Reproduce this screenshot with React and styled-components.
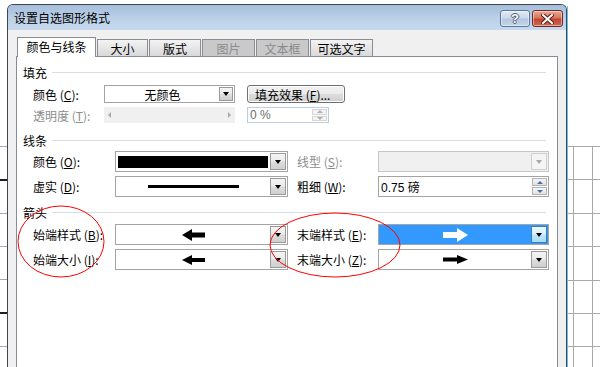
import styled, { createGlobalStyle } from "styled-components";

const GlobalStyle = createGlobalStyle`
  html, body {
    margin: 0;
    padding: 0;
    background: #fff;
    overflow: hidden;
  }
  body {
    font-family: "Noto Sans CJK SC", "Liberation Sans", sans-serif;
    font-size: 12px;
    color: #000;
  }
`;

const Page = styled.div`
  position: relative;
  width: 600px;
  height: 367px;
  overflow: hidden;
  display: flex;
  align-items: flex-start;
`;

const LeftStrip = styled.div`
  width: 7px;
  height: 367px;
  background: linear-gradient(
    to bottom,
    transparent 0 146px, #a9a9a9 146px 147px,
    transparent 147px 179px, #1e1e1e 179px 181px,
    transparent 181px 213px, #a9a9a9 213px 214px,
    transparent 214px 246px, #a9a9a9 246px 247px,
    transparent 247px 279px, #a9a9a9 279px 280px,
    transparent 280px 312px, #1e1e1e 312px 314px,
    transparent 314px 346px, #a9a9a9 346px 347px,
    transparent 347px
  );
`;

const RightStrip = styled.div`
  flex: 1;
  height: 367px;
  margin-top: 6px;
  border-left: 1px solid #5cc6ee;
  background:
    repeating-linear-gradient(to bottom, #a9a9a9 0 1px, transparent 1px 33.4px) 0 140px / 100% 240px no-repeat,
    linear-gradient(to right, transparent 5px, #a9a9a9 5px 6px, transparent 6px 24px, #a9a9a9 24px 25px, transparent 25px) 0 140px / 100% 240px no-repeat;
`;

const Dialog = styled.div`
  box-sizing: border-box;
  width: 560px;
  height: 380px;
  margin-top: 4px;
  border: 1px solid #3f4650;
  border-bottom: none;
  border-radius: 6px 6px 0 0;
  background: #f0f0f0;
  display: flex;
  flex-direction: column;
  overflow: hidden;
`;

const TitleBar = styled.div`
  height: 25px;
  display: flex;
  align-items: flex-start;
  padding: 0 3px 0 6px;
  background: linear-gradient(#a6bdda, #bcd1e9 55%, #c6d9ee);
`;

const Title = styled.div`
  flex: 1;
  line-height: 25px;
`;

const CaptionButton = styled.div`
  box-sizing: border-box;
  width: ${(p) => p.$w}px;
  height: 17px;
  margin-top: 5px;
  margin-left: ${(p) => p.$ml || 0}px;
  border: 1px solid ${(p) => (p.$close ? "#6e2a22" : "#5d7699")};
  border-radius: 3px;
  background: ${(p) =>
    p.$close
      ? "linear-gradient(#eaa796, #d8765f 45%, #c2452e 55%, #cf6a4f)"
      : "linear-gradient(#e3ebf5, #cbd9ea 45%, #b3c7e0 55%, #c4d6ea)"};
  box-shadow: inset 0 0 0 1px rgba(255, 255, 255, 0.45);
  display: flex;
  align-items: center;
  justify-content: center;
  font-family: "Liberation Sans", sans-serif;
  font-weight: bold;
  font-size: 13px;
  color: #fff;
  text-shadow: 1px 0 0 #4b5d77, -1px 0 0 #4b5d77, 0 1px 0 #4b5d77, 0 -1px 0 #4b5d77;
`;

const Body = styled.div`
  flex: 1;
  display: flex;
  flex-direction: column;
  padding: 7px 8px 0 8px;
`;

const TabRow = styled.div`
  display: flex;
  align-items: flex-end;
  gap: 1px;
  height: 20px;
  margin: 0 0 -1px 1px;
  position: relative;
  z-index: 1;
`;

const Tab = styled.div`
  box-sizing: border-box;
  width: ${(p) => p.$w}px;
  height: ${(p) => (p.$active ? 20 : 17)}px;
  margin-bottom: ${(p) => (p.$active ? 0 : 1)}px;
  border: 1px solid #898c95;
  border-bottom: none;
  display: flex;
  align-items: center;
  justify-content: center;
  color: ${(p) => (p.$disabled ? "#8b8b8b" : "#000")};
  background: ${(p) =>
    p.$active ? "#fff" : p.$disabled ? "#c9c9c9" : "linear-gradient(#f3f3f3, #e6e6e6 50%, #d9d9d9)"};
  padding-bottom: ${(p) => (p.$active ? 2 : 0)}px;
`;

const Panel = styled.div`
  flex: 1;
  background: #fff;
  border: 1px solid #898c95;
  padding: 5px 7px 0 6px;
`;

const SectionHead = styled.div`
  display: flex;
  align-items: center;
  gap: 5px;
  height: 20px;
  margin-top: ${(p) => p.$mt || 0}px;
  &::after {
    content: "";
    flex: 1;
    height: 1px;
    background: #d7dee4;
    margin-right: 4px;
  }
`;

const FormGrid = styled.div`
  display: grid;
  grid-template-columns: ${(p) => p.$cols};
  grid-template-rows: ${(p) => p.$rows};
  row-gap: 4px;
  margin-top: ${(p) => p.$mt || 0}px;
  padding-left: 10px;
`;

const Label = styled.div`
  display: flex;
  align-items: center;
  white-space: nowrap;
  padding-left: ${(p) => p.$pl || 0}px;
  color: ${(p) => (p.$disabled ? "#8d8d8d" : "#000")};
  u {
    text-decoration: underline;
  }
`;

const Select = styled.div`
  box-sizing: border-box;
  height: 100%;
  display: flex;
  padding: 1px;
  border: 1px solid ${(p) => (p.$disabled ? "#c6c6c6" : "#a4a4a4")};
  background: ${(p) => (p.$active ? "#3399ff" : p.$disabled ? "#f0f0f0" : "#fff")};
`;

const SelectValue = styled.div`
  flex: 1;
  display: flex;
  align-items: center;
  justify-content: center;
  padding: ${(p) => p.$pad || "0"};
`;

const Swatch = styled.div`
  flex: 1;
  align-self: stretch;
  background: #000;
`;

const DashLine = styled.div`
  width: 91px;
  height: 3px;
  background: #000;
`;

const DropButton = styled.div`
  box-sizing: border-box;
  width: ${(p) => p.$w || 16}px;
  border: 1px solid ${(p) => (p.$active ? "#3c7fb1" : p.$disabled ? "#cfcfcf" : "#9a9a9a")};
  background: ${(p) =>
    p.$active
      ? "linear-gradient(#eaf6fd, #d9f0fc 45%, #bee6fd 55%, #a7d9f5)"
      : p.$disabled
      ? "#f4f4f4"
      : "linear-gradient(#f4f4f4, #ebebeb 45%, #dcdcdc 55%, #cfcfcf)"};
  display: flex;
  align-items: center;
  justify-content: center;
  &::after {
    content: "";
    border-left: 3.5px solid transparent;
    border-right: 3.5px solid transparent;
    border-top: 4px solid ${(p) => (p.$disabled ? "#a8a8a8" : "#000")};
  }
`;

const PushButton = styled.div`
  box-sizing: border-box;
  width: 98px;
  height: 18px;
  border: 1px solid #707070;
  border-radius: 3px;
  background: linear-gradient(#f2f2f2, #ebebeb 50%, #dddddd 50%, #cfcfcf);
  box-shadow: inset 0 0 0 1px #fbfbfb;
  display: flex;
  align-items: center;
  padding-left: 7px;
  white-space: nowrap;
`;

const Slider = styled.div`
  display: flex;
  align-items: center;
  justify-content: space-between;
  padding: 0 4px;
  background: #f0f0f0;
  &::before,
  &::after {
    content: "";
    border-top: 3px solid transparent;
    border-bottom: 3px solid transparent;
  }
  &::before {
    border-right: 3px solid #a9a9a9;
  }
  &::after {
    border-left: 3px solid #a9a9a9;
  }
`;

const Spin = styled.div`
  box-sizing: border-box;
  width: ${(p) => p.$w}px;
  height: 100%;
  display: flex;
  border: 1px solid ${(p) => (p.$disabled ? "#bcd0e4" : "#a4a4a4")};
  background: #fff;
`;

const SpinText = styled.div`
  flex: 1;
  display: flex;
  align-items: center;
  padding-left: 2px;
  color: ${(p) => (p.$disabled ? "#6d6d6d" : "#000")};
  font-family: "Liberation Sans", "Noto Sans CJK SC", sans-serif;
`;

const SpinButtons = styled.div`
  width: 15px;
  display: flex;
  flex-direction: column;
  padding: 1px;
  gap: 1px;
`;

const SpinHalf = styled.div`
  flex: 1;
  border: 1px solid ${(p) => (p.$disabled ? "#d5d5d5" : "#b3b3b3")};
  background: ${(p) => (p.$disabled ? "#f4f4f4" : "linear-gradient(#f6f6f6, #e1e1e1)")};
  display: flex;
  align-items: center;
  justify-content: center;
  &::after {
    content: "";
    border-left: 3px solid transparent;
    border-right: 3px solid transparent;
    ${(p) => (p.$up ? "border-bottom" : "border-top")}: 3px solid ${(p) =>
      p.$disabled ? "#b0b0b0" : "#4b6fa7"};
  }
`;

const Marks = styled.svg`
  position: absolute;
  left: 0;
  top: 0;
  pointer-events: none;
`;

function Arrow({ dir, color, w, h, shaft }) {
  const head = Math.round(w * 0.45);
  const mid = h / 2;
  const s0 = mid - shaft / 2;
  if (dir === "left") {
    return (
      <svg width={w} height={h}>
        <polygon points={`0,${mid} ${head},0 ${head},${h}`} fill={color} />
        <rect x={head - 1} y={s0} width={w - head + 1} height={shaft} fill={color} />
      </svg>
    );
  }
  return (
    <svg width={w} height={h}>
      <rect x="0" y={s0} width={w - head + 1} height={shaft} fill={color} />
      <polygon points={`${w - head},0 ${w},${mid} ${w - head},${h}`} fill={color} />
    </svg>
  );
}

function Dropdown({ children, pad, active, disabled, btnW }) {
  return (
    <Select $active={active} $disabled={disabled}>
      <SelectValue $pad={pad}>{children}</SelectValue>
      <DropButton $active={active} $disabled={disabled} $w={btnW} />
    </Select>
  );
}

function SpinBox({ text, w, disabled }) {
  return (
    <Spin $w={w} $disabled={disabled}>
      <SpinText $disabled={disabled}>{text}</SpinText>
      <SpinButtons>
        <SpinHalf $up $disabled={disabled} />
        <SpinHalf $disabled={disabled} />
      </SpinButtons>
    </Spin>
  );
}

const tabs = [
  { name: "颜色与线条", w: 79, active: true },
  { name: "大小", w: 51 },
  { name: "版式", w: 52 },
  { name: "图片", w: 53, disabled: true },
  { name: "文本框", w: 53, disabled: true },
  { name: "可选文字", w: 63 },
];

const lineCols = "82px 173px 90px 171px";

export default function App() {
  return (
    <Page>
      <GlobalStyle />
      <LeftStrip />
      <Dialog>
        <TitleBar>
          <Title>设置自选图形格式</Title>
          <CaptionButton $w={30}>?</CaptionButton>
          <CaptionButton $w={31} $ml={2} $close>
            <svg width="13" height="10" viewBox="0 0 13 10">
              <path d="M2 1 L11 9 M11 1 L2 9" stroke="#5a2219" strokeWidth="4" strokeLinecap="square" />
              <path d="M2 1 L11 9 M11 1 L2 9" stroke="#fff" strokeWidth="2" strokeLinecap="square" />
            </svg>
          </CaptionButton>
        </TitleBar>
        <Body>
          <TabRow>
            {tabs.map((t) => (
              <Tab key={t.name} $w={t.w} $active={t.active} $disabled={t.disabled}>
                {t.name}
              </Tab>
            ))}
          </TabRow>
          <Panel>
            <SectionHead>填充</SectionHead>
            <FormGrid $cols="71px 131px 12px 98px" $rows="18px 16px" $mt={3}>
              <Label>
                颜色 (<u>C</u>):
              </Label>
              <Dropdown btnW={14}>无颜色</Dropdown>
              <div />
              <PushButton>
                填充效果 (<u>F</u>)...
              </PushButton>
              <Label $disabled>
                透明度 (<u>T</u>):
              </Label>
              <Slider />
              <div />
              <SpinBox text="0 %" w={82} disabled />
            </FormGrid>

            <SectionHead $mt={7}>线条</SectionHead>
            <FormGrid $cols={lineCols} $rows="21px 21px" $mt={1}>
              <Label>
                颜色 (<u>O</u>):
              </Label>
              <Dropdown pad="3px 2px 2px 1px">
                <Swatch />
              </Dropdown>
              <Label $pl={9} $disabled>
                线型 (<u>S</u>):
              </Label>
              <Dropdown disabled />
              <Label>
                虚实 (<u>D</u>):
              </Label>
              <Dropdown>
                <DashLine />
              </Dropdown>
              <Label $pl={9}>
                粗细 (<u>W</u>):
              </Label>
              <SpinBox text="0.75 磅" w={171} />
            </FormGrid>

            <SectionHead $mt={5}>箭头</SectionHead>
            <FormGrid $cols={lineCols} $rows="21px 21px" $mt={2}>
              <Label>
                始端样式 (<u>B</u>):
              </Label>
              <Dropdown>
                <Arrow dir="left" color="#000" w={23} h={12} shaft={5} />
              </Dropdown>
              <Label $pl={9}>
                末端样式 (<u>E</u>):
              </Label>
              <Dropdown active>
                <Arrow dir="right" color="#fff" w={25} h={14} shaft={6} />
              </Dropdown>
              <Label>
                始端大小 (<u>I</u>):
              </Label>
              <Dropdown>
                <Arrow dir="left" color="#000" w={23} h={10} shaft={4} />
              </Dropdown>
              <Label $pl={9}>
                末端大小 (<u>Z</u>):
              </Label>
              <Dropdown>
                <Arrow dir="right" color="#000" w={25} h={9} shaft={4} />
              </Dropdown>
            </FormGrid>
          </Panel>
        </Body>
      </Dialog>
      <RightStrip />
      <Marks width="600" height="367">
        <ellipse cx="61" cy="241.5" rx="43" ry="35.5" fill="none" stroke="#ff0000" strokeWidth="1" />
        <ellipse cx="335" cy="245" rx="65" ry="32" fill="none" stroke="#ff0000" strokeWidth="1" />
      </Marks>
    </Page>
  );
}
